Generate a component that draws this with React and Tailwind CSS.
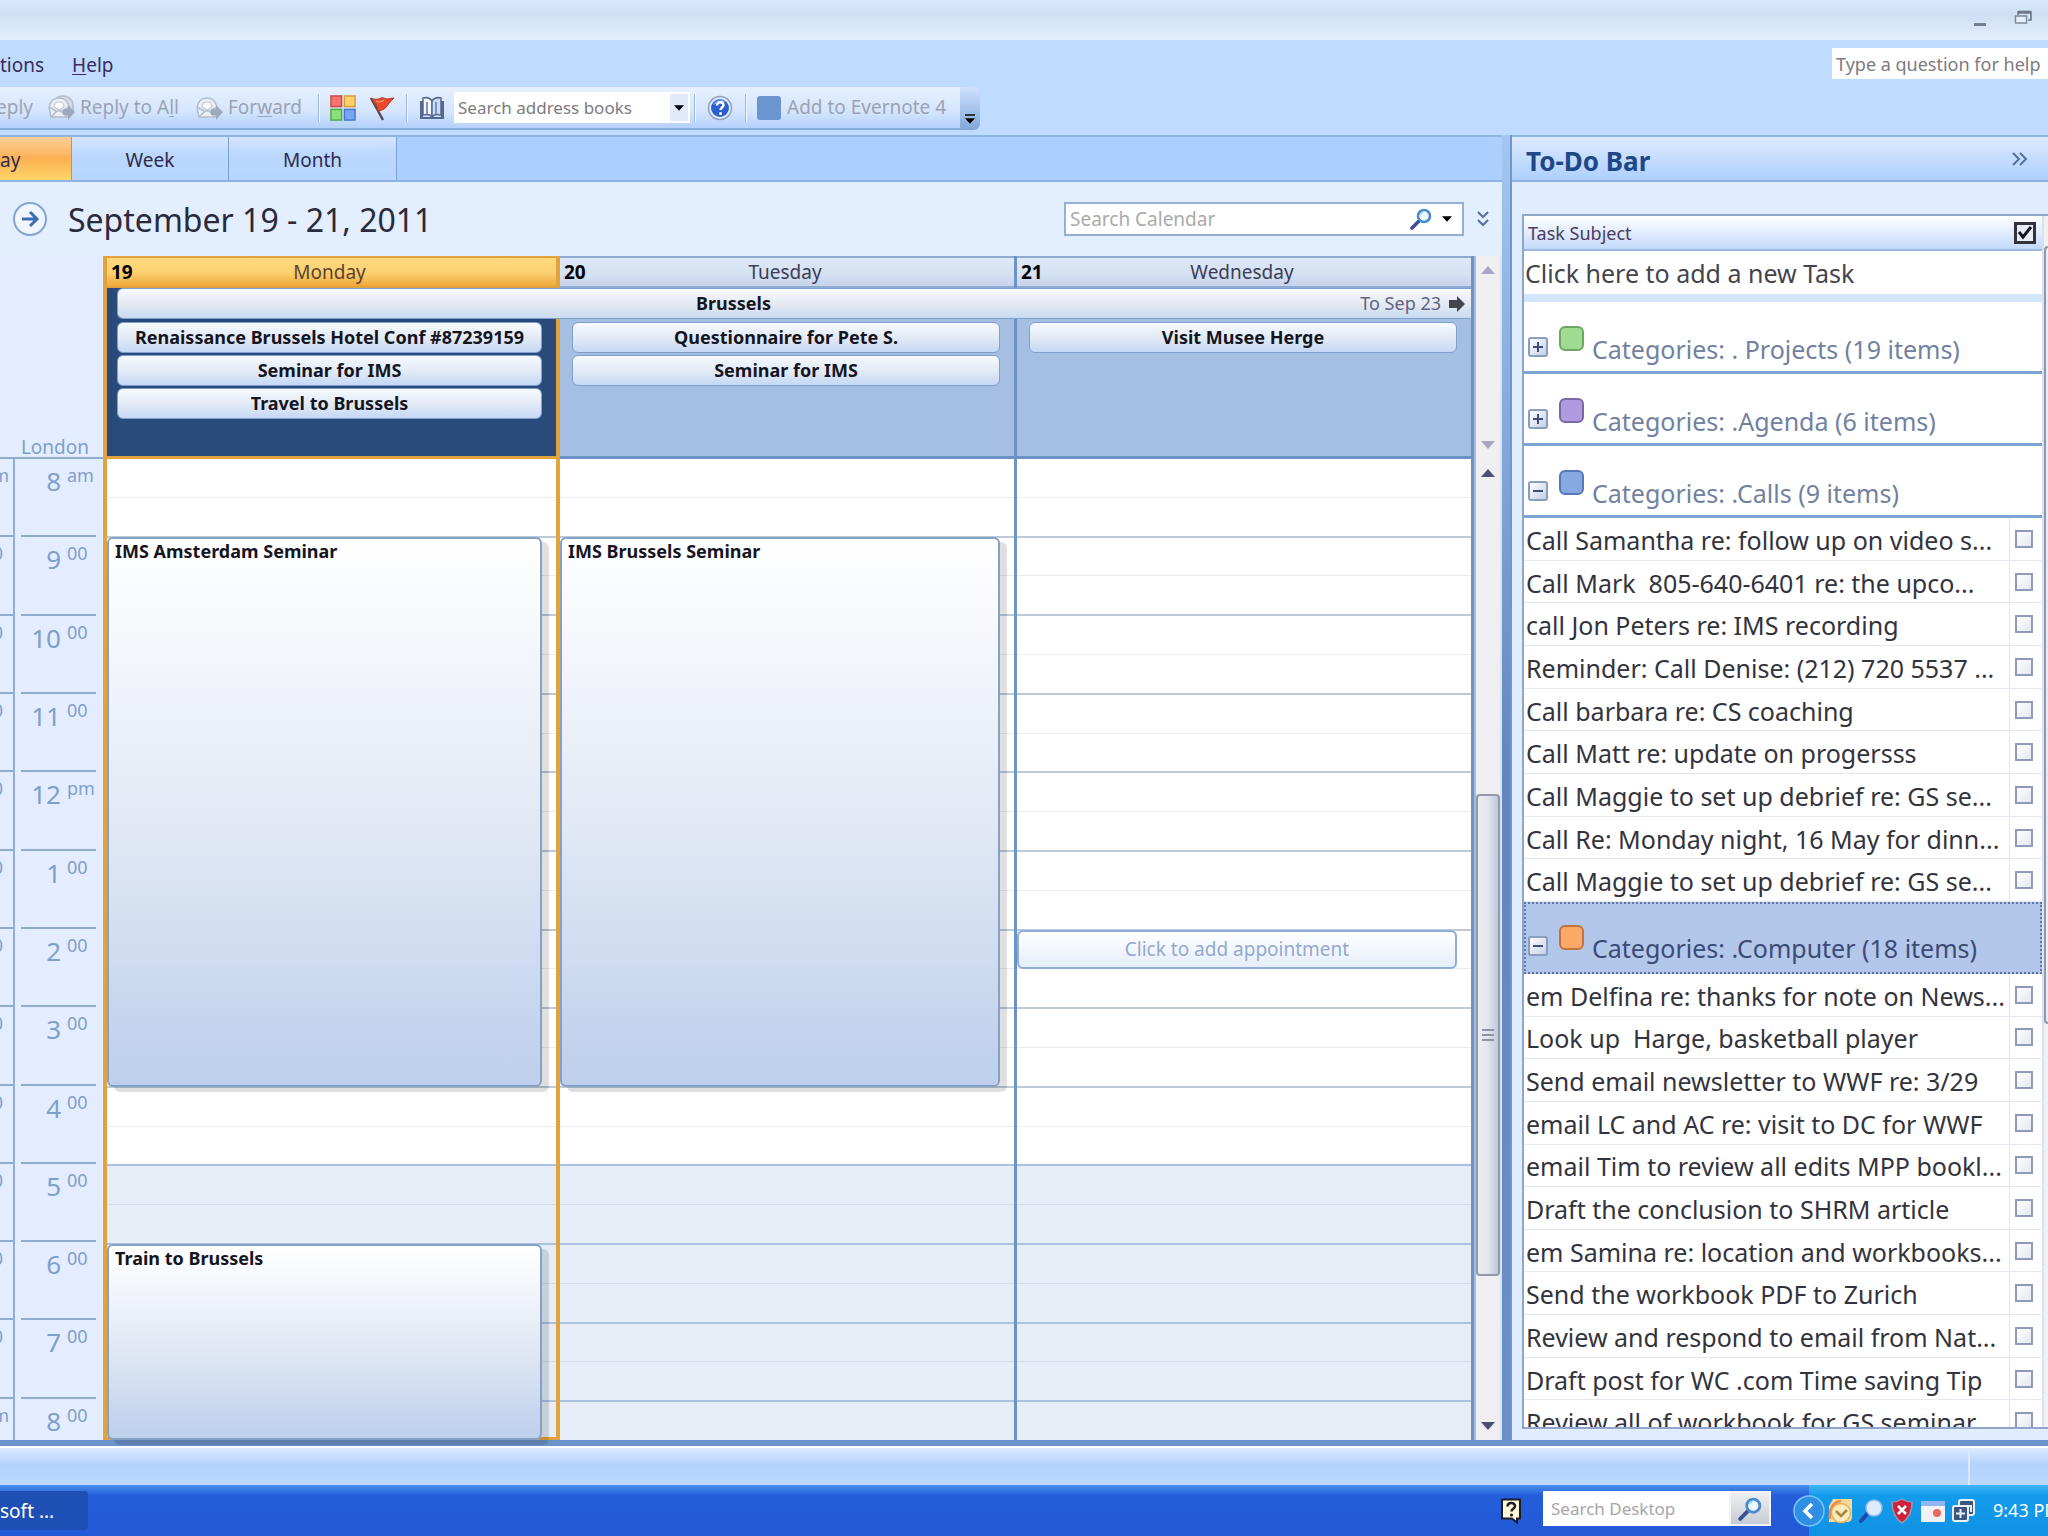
import { useState } from 'react'
import clsx from 'clsx'

const HOURS = [
  { hour: '8',  suffix: 'am', left: 'am' },
  { hour: '9',  suffix: '00', left: '00' },
  { hour: '10', suffix: '00', left: '00' },
  { hour: '11', suffix: '00', left: '00' },
  { hour: '12', suffix: 'pm', left: '00' },
  { hour: '1',  suffix: '00', left: '00' },
  { hour: '2',  suffix: '00', left: '00' },
  { hour: '3',  suffix: '00', left: '00' },
  { hour: '4',  suffix: '00', left: '00' },
  { hour: '5',  suffix: '00', left: '00' },
  { hour: '6',  suffix: '00', left: '00' },
  { hour: '7',  suffix: '00', left: '00' },
  { hour: '8',  suffix: '00', left: 'pm' },
]

// start and end are half-hour slots counted from 8 am
const SLOTS = 25
const WORK_END = 18

const DAYS = [
  {
    date: '19',
    name: 'Monday',
    today: true,
    allDay: ['Renaissance Brussels Hotel Conf #87239159', 'Seminar for IMS', 'Travel to Brussels'],
    events: [
      { title: 'IMS Amsterdam Seminar', start: 2, end: 16 },
      { title: 'Train to Brussels', start: 20, end: 25 },
    ],
  },
  {
    date: '20',
    name: 'Tuesday',
    allDay: ['Questionnaire for Pete S.', 'Seminar for IMS'],
    events: [{ title: 'IMS Brussels Seminar', start: 2, end: 16 }],
  },
  {
    date: '21',
    name: 'Wednesday',
    allDay: ['Visit Musee Herge'],
    events: [],
    placeholder: { title: 'Click to add appointment', start: 12, end: 13 },
  },
]

const CALLS = [
  'Call Samantha re: follow up on video s...',
  'Call Mark  805-640-6401 re: the upco...',
  'call Jon Peters re: IMS recording',
  'Reminder: Call Denise: (212) 720 5537 ...',
  'Call barbara re: CS coaching',
  'Call Matt re: update on progersss',
  'Call Maggie to set up debrief re: GS se...',
  'Call Re: Monday night, 16 May for dinn...',
  'Call Maggie to set up debrief re: GS se...',
]

const COMPUTER = [
  'em Delfina re: thanks for note on News...',
  'Look up  Harge, basketball player',
  'Send email newsletter to WWF re: 3/29',
  'email LC and AC re: visit to DC for WWF',
  'email Tim to review all edits MPP bookl...',
  'Draft the conclusion to SHRM article',
  'em Samina re: location and workbooks...',
  'Send the workbook PDF to Zurich',
  'Review and respond to email from Nat...',
  'Draft post for WC .com Time saving Tip',
  'Review all of workbook for GS seminar',
]

const slotStyle = (start, end) => ({
  top: `${(start / SLOTS) * 100}%`,
  height: `${((end - start) / SLOTS) * 100}%`,
})

function Triangle({ small, up }) {
  return (
    <svg viewBox="0 0 16 9" className={clsx('shrink-0', small ? 'h-1.5 w-2.5' : 'h-2 w-3.5')} fill="currentColor" aria-hidden="true">
      <path d={up ? 'M8 0 16 9H0z' : 'M0 0h16L8 9z'} />
    </svg>
  )
}

function Magnifier({ className }) {
  return (
    <svg viewBox="0 0 22 22" className={className} fill="none" aria-hidden="true">
      <path d="M2 20 9 13" stroke="#3f4f96" strokeWidth="3.6" strokeLinecap="round" />
      <circle cx="14" cy="8" r="6" fill="#eef8ff" stroke="#4a8ccb" strokeWidth="2.6" />
      <path d="M10.5 7a4 4 0 0 1 3-3" stroke="#9fdcf0" strokeWidth="1.5" />
    </svg>
  )
}

function MailIcon({ double }) {
  return (
    <svg viewBox="0 0 28 28" className="size-7 shrink-0" fill="none" aria-hidden="true">
      {double && <path d="M7 7c1-4 4-5 8-5 6 0 10 4 10 9v6h-4" fill="#d3dae6" stroke="#b3bccb" strokeWidth="1.5" />}
      <path d="M1 14C2 7 6 4 11 4s9 3 10 10l-2 9H3z" fill="#eaeff7" stroke="#b3bccb" strokeWidth="1.5" />
      <path d="M6 13c0-4 2-5 5-5s5 1 5 5l-5 3z" fill="#f8faff" stroke="#c3cad6" strokeWidth="1.2" />
      <path d="m3 23 6-6h4l6 6M1 13l7 4M21 13l-7 4" stroke="#b3bccb" strokeWidth="1.5" />
      <path d="M15 15h5v-4l7 7-7 8v-5h-5z" fill="#9fa9bd" />
    </svg>
  )
}

function Divider() {
  return <div className="h-7 w-0.5 border-l border-[#9dbde9] bg-[#f0f6ff]" />
}

function TitleBar() {
  return (
    <header className="flex h-10 shrink-0 items-start justify-end gap-7 bg-linear-to-b from-[#d8e7fb] via-[#cfdff5] via-35% to-[#e2effd] pt-2.5 pr-4">
      <button type="button" aria-label="Minimize" className="flex h-4 items-end">
        <span className="h-[3px] w-3 bg-[#75818f]" />
      </button>
      <button type="button" aria-label="Restore">
        <svg viewBox="0 0 18 14" className="h-3.5 w-[18px]" fill="none">
          <path d="M4 5V2h13v8h-3" stroke="#6c7887" strokeWidth="1.6" />
          <path d="M4 2.2h13" stroke="#6c7887" strokeWidth="3" />
          <path d="M1.5 6h11v7h-11z" fill="#e6eef9" stroke="#7c8897" strokeWidth="1.4" />
        </svg>
      </button>
    </header>
  )
}

function MenuBar() {
  return (
    <nav className="flex h-[47px] shrink-0 items-center justify-between bg-[#bfdbff]">
      <div className="flex gap-7 pt-0.5 text-[19px] leading-6 text-[#3b2c5c]">
        <button type="button">tions</button>
        <button type="button"><span className="underline underline-offset-2">H</span>elp</button>
      </div>
      <input type="text" aria-label="Type a question for help" placeholder="Type a question for help"
        className="h-[31px] w-[216px] bg-white pl-1 text-[18px] placeholder:text-[#7b7b80]" />
    </nav>
  )
}

function Toolbar() {
  return (
    <div className="flex h-12 shrink-0 items-start bg-[#bfdbff]">
      <div className="flex h-[43px] w-[960px] items-center border-b-2 border-[#86abe0] bg-linear-to-b from-[#e6f0ff] via-[#d5e5fe] via-60% to-[#b3d0fb] text-[19px] whitespace-nowrap text-[#9aa3b4]">
        <button type="button" className="w-12 -indent-1 text-left">eply</button>
        <button type="button" className="flex w-[148px] items-center gap-1">
          <MailIcon double />
          <span>Reply to A<span className="underline underline-offset-2">l</span>l</span>
        </button>
        <button type="button" className="flex w-[122px] items-center gap-1">
          <MailIcon />
          <span>For<span className="underline underline-offset-2">w</span>ard</span>
        </button>
        <Divider />
        <button type="button" aria-label="Categorize" className="ml-2.5">
          <svg viewBox="0 0 28 28" className="size-[26px]">
            <rect x="1" y="1" width="11.500" height="11.500" fill="#f4736c" stroke="#c9483f" strokeWidth="1.5" />
            <rect x="15.500" y="1" width="11.500" height="11.500" fill="#fbcf6d" stroke="#d79a2c" strokeWidth="1.5" />
            <rect x="1" y="15.500" width="11.500" height="11.500" fill="#8be07c" stroke="#4aa83c" strokeWidth="1.5" />
            <rect x="15.500" y="15.500" width="11.500" height="11.500" fill="#79a4f0" stroke="#4674cc" strokeWidth="1.5" />
          </svg>
        </button>
        <button type="button" aria-label="Follow up" className="ml-3.5">
          <svg viewBox="0 0 26 26" className="size-[26px]">
            <path d="M1 3 13 25" stroke="#5a4a52" strokeWidth="2.400" />
            <path d="M2 4c4 0 6 1 9-1 2-1 4 1 6 1s4-1 7-1c-3 3-5 5-7 8s-4 4-9 5C8 11 5 9 2 4z" fill="#e8492b" stroke="#b8341c" />
            <path d="M6 6c3 1 6 1 8-1" stroke="#f58a6a" strokeWidth="1.5" fill="none" />
          </svg>
        </button>
        <div className="ml-2.5"><Divider /></div>
        <button type="button" aria-label="Address book" className="ml-2.5">
          <svg viewBox="0 0 28 26" className="h-[26px] w-7" fill="none">
            <path d="M2 6h3v16h18V6h3v18H2z" fill="#55688f" />
            <path d="M5 3c4-1 7 0 9 3v16c-2-3-5-3-9-2z" fill="#f6f9ff" stroke="#55688f" strokeWidth="1.5" />
            <path d="M23 3c-4-1-7 0-9 3v16c2-3 5-3 9-2z" fill="#cddcf5" stroke="#55688f" strokeWidth="1.5" />
            <path d="M9 7v12M18 7v12" stroke="#7d93bd" strokeWidth="2" />
          </svg>
        </button>
        <div className="ml-2 flex h-[31px] bg-white">
          <input type="text" aria-label="Search address books" placeholder="Search address books"
            className="w-[216px] pl-1 text-[17px] placeholder:text-[#7b7b80]" />
          <button type="button" aria-label="Show address books" className="my-0.5 mr-0.5 flex w-[18px] items-center justify-center bg-[#e0eafa] text-black">
            <Triangle small />
          </button>
        </div>
        <div className="ml-1"><Divider /></div>
        <button type="button" aria-label="Help" className="ml-[11px]">
          <svg viewBox="0 0 26 26" className="size-[26px]">
            <circle cx="13" cy="13" r="11.5" fill="#e9f0fb" stroke="#8a9fc4" strokeWidth="1.5" />
            <circle cx="13" cy="13" r="9" fill="#2a5fd0" />
            <path d="M6 10a8 8 0 0 1 13-3c-5 0-9 1-13 3z" fill="#6f9bf0" />
            <path d="M10 10.5c0-4.500 6.500-4 6.500-.5 0 2.500-3 2.500-3 5" stroke="#fff" strokeWidth="2.400" fill="none" />
            <circle cx="13.500" cy="18.500" r="1.500" fill="#fff" />
          </svg>
        </button>
        <div className="ml-3"><Divider /></div>
        <button type="button" className="ml-2.5 flex items-center gap-1.5">
          <span className="size-6 rounded-[3px] bg-[#6b95cf]" />
          Add to Evernote 4
        </button>
      </div>
      <button type="button" aria-label="Toolbar options"
        className="flex h-[43px] w-5 flex-col items-center justify-end gap-0.5 rounded-r-md bg-linear-to-b from-[#cfe2ff] to-[#82a7da] pb-1.5 text-black">
        <span className="h-0.5 w-2.5 bg-[#33333d]" />
        <Triangle small />
      </button>
    </div>
  )
}

function ViewTabs() {
  const [view, setView] = useState('Day')
  const tab = 'border-r border-[#7ba1d4] pt-1 text-[19px]'
  const on = 'bg-linear-to-b from-[#fdcf98] via-[#fcb153] via-50% to-[#fed567]'
  const off = 'bg-linear-to-b from-[#d5e6ff] via-[#bcd8fe] via-40% to-[#b6d5ff]'
  return (
    <div className="flex h-[47px] shrink-0 border-y-2 border-[#8fb4e4] bg-[#abd0ff] text-[#2f2a4d]">
      <button type="button" onClick={() => setView('Day')} className={clsx(tab, 'w-[72px] text-left', view === 'Day' ? on : off)}>ay</button>
      <button type="button" onClick={() => setView('Week')} className={clsx(tab, 'w-[157px]', view === 'Week' ? on : off)}>Week</button>
      <button type="button" onClick={() => setView('Month')} className={clsx(tab, 'w-[168px]', view === 'Month' ? on : off)}>Month</button>
    </div>
  )
}

function DateHeader() {
  return (
    <div className="flex h-[74px] shrink-0 items-center bg-[#e3eeff] pr-3">
      <button type="button" aria-label="Next" className="ml-3">
        <svg viewBox="0 0 36 36" className="size-9" fill="none">
          <circle cx="18" cy="18" r="16" fill="#f0f6ff" stroke="#86a3d2" strokeWidth="2" />
          <path d="M10 18h15M18 11l7 7-7 7" stroke="#3e6cb4" strokeWidth="3" />
        </svg>
      </button>
      <h1 className="ml-5 pt-0.5 text-[32px] leading-10 text-[#2a2a3a]">September 19 - 21, 2011</h1>
      <div className="ml-auto flex h-[34px] w-[400px] items-center border-2 border-[#94afd3] bg-white">
        <input type="search" aria-label="Search Calendar" placeholder="Search Calendar"
          className="min-w-0 flex-1 pl-1 text-[19px] placeholder:text-[#a9aba9]" />
        <button type="button" aria-label="Search"><Magnifier className="size-[22px]" /></button>
        <button type="button" aria-label="Search options" className="flex w-[30px] justify-center text-black"><Triangle small /></button>
      </div>
      <button type="button" aria-label="Expand the query builder" className="ml-3">
        <svg viewBox="0 0 14 16" className="h-4 w-3.5" fill="none" stroke="#55709f" strokeWidth="2">
          <path d="m2 1 5 5 5-5M2 9l5 5 5-5" />
        </svg>
      </button>
    </div>
  )
}

function TimeScale() {
  return (
    <div className="flex w-[103px] shrink-0 flex-col bg-[#e4edff] text-[#7f9fcb]">
      <div className="flex h-[201px] items-end justify-end pr-3.5 text-[19px] leading-5">London</div>
      <div className="flex min-h-0 flex-1 border-t-2 border-[#8fabcf]">
        <div className="flex w-[15px] flex-col overflow-hidden border-r-2 border-[#8fb0d4]">
          {HOURS.map((h, i) => (
            <div key={i} className={clsx('flex min-h-0 justify-end overflow-hidden pt-1.5 text-[18px] leading-5',
              i === 12 ? 'flex-1' : 'flex-2', i > 0 && 'border-t-2 border-[#8fabcf]', h.left === '00' ? 'pr-2.5' : 'pr-1')}>
              {h.left}
            </div>
          ))}
        </div>
        <div className="flex flex-1 flex-col pr-[7px] pl-1.5">
          {HOURS.map((h, i) => (
            <div key={i} className={clsx('flex min-h-0 items-start pt-1.5 text-[18px] leading-5',
              i === 12 ? 'flex-1' : 'flex-2', i > 0 && 'border-t-2 border-[#8fabcf]')}>
              <span className="w-10 pt-0.5 text-right text-[26px] leading-7">{h.hour}</span>
              <span className="ml-1.5">{h.suffix}</span>
            </div>
          ))}
        </div>
      </div>
    </div>
  )
}

const pill = 'flex h-[31px] w-full items-center justify-center rounded-md border border-[#7f9fce] bg-linear-to-b from-[#f6faff] via-[#e1e9f5] via-55% to-[#c5d8f5] text-[18px] font-bold whitespace-nowrap text-[#15151f]'

function Calendar() {
  return (
    <div className="relative grid min-w-0 flex-1 grid-cols-3">
      {DAYS.map(day => (
        <section key={day.date} className={clsx('flex min-w-0 flex-col',
          day.today ? 'border-x-4 border-[#e2a33c]' : 'border-r-[3px] border-[#6c93c6]')}>
          <div className={clsx('grid h-8 shrink-0 grid-cols-[1fr_auto_1fr] items-center border-y-2 pr-2 pl-1 text-[19px]',
            day.today
              ? 'border-[#e2a33c] bg-linear-to-b from-[#ffdb7e] via-[#fdd272] via-50% to-[#f0a93a] text-[#5b4330]'
              : 'border-[#8fabd0] bg-linear-to-b from-[#dde8f7] via-[#d5e0f3] via-60% to-[#c5d4ec] text-[#3c3c55]')}>
            <span className="font-bold text-black">{day.date}</span>
            <span>{day.name}</span>
          </div>
          <div className={clsx('flex h-[171px] shrink-0 flex-col gap-0.5 border-b-[3px] pt-[34px] pr-3.5',
            day.today ? 'border-[#e2a33c] bg-[#294b7b] pl-2.5' : 'border-[#6c93c6] bg-[#a5bfe3] pl-3')}>
            {day.allDay.map(title => (
              <button type="button" key={title} className={pill}>{title}</button>
            ))}
          </div>
          <div className="relative flex min-h-0 flex-1 flex-col">
            {Array.from({ length: SLOTS }, (_, i) => (
              <div key={i} className={clsx('min-h-0 flex-1',
                i >= WORK_END ? 'bg-[#e6edf7]' : 'bg-white',
                i > 0 && i % 2 === 1 && (i >= WORK_END ? 'border-t border-[#d3ddea]' : 'border-t border-[#e9ebee]'),
                i > 0 && i % 2 === 0 && (i >= WORK_END ? 'border-t-2 border-[#a9c2e2]' : 'border-t-2 border-[#bccad8]'))} />
            ))}
            {day.today && <div className="absolute inset-x-0 bottom-0 h-[3px] bg-[#e2a33c]" />}
            {day.events.map(e => (
              <button type="button" key={e.title} style={slotStyle(e.start, e.end)}
                className="absolute left-0 right-3.5 flex items-start rounded-md border-2 border-[#86a1c6] bg-linear-to-b from-white via-[#e3eaf5] via-50% to-[#bdcfec] pl-1.5 text-[18px] leading-6 font-bold text-[#15151f] shadow-[7px_5px_1px_#00000020]">
                {e.title}
              </button>
            ))}
            {day.placeholder && (
              <button type="button" style={slotStyle(day.placeholder.start, day.placeholder.end)}
                className="absolute left-0 right-3.5 rounded-md border-2 border-[#8fadd6] bg-linear-to-b from-white to-[#e6eefb] text-[19px] text-[#93a9cf]">
                {day.placeholder.title}
              </button>
            )}
          </div>
        </section>
      ))}
      {/* event that runs across all three days */}
      <button type="button"
        className="absolute top-8 right-[3px] left-3.5 grid h-[31px] grid-cols-[1fr_auto_1fr] items-center rounded-l-md border border-r-0 border-[#7f9fce] bg-linear-to-b from-[#f8fbff] via-[#e3e8f0] via-55% to-[#c8dbf3] pr-1.5 text-[18px]">
        <span />
        <span className="pr-[116px] font-bold text-[#15151f]">Brussels</span>
        <span className="flex items-center justify-end gap-2 text-[#5d6384]">
          To Sep 23
          <svg viewBox="0 0 16 16" className="size-4" fill="#44444c" aria-hidden="true"><path d="M0 4h8V0l8 8-8 8v-4H0z" /></svg>
        </span>
      </button>
    </div>
  )
}

function CalendarScroll() {
  return (
    <div className="flex w-7 shrink-0 flex-col border-x-2 border-l-[#a9b9dd] border-r-[#d8e4f6] bg-[#efeff1] text-[#4b4f72]">
      <div className="flex h-[203px] shrink-0 flex-col items-center justify-between pt-2.5 pb-2.5 text-[#a5a8c0]">
        <Triangle up />
        <Triangle />
      </div>
      <div className="flex min-h-0 flex-1 flex-col items-center justify-between pt-2.5 pb-2.5">
        <Triangle up />
        <div className="flex w-full flex-1 flex-col pt-[317px] pb-[146px]">
          <div className="flex flex-1 flex-col items-center justify-center gap-[3px] rounded-sm border-2 border-[#9497ab] bg-linear-to-r from-[#e9edf1] via-[#e4e7ee] via-45% to-[#bccadc]">
            <span className="h-0.5 w-3 bg-[#8c93a8]" />
            <span className="h-0.5 w-3 bg-[#8c93a8]" />
            <span className="h-0.5 w-3 bg-[#8c93a8]" />
          </div>
        </div>
        <Triangle />
      </div>
    </div>
  )
}

function Group({ label, color, open, selected }) {
  return (
    <button type="button" aria-expanded={open}
      className={clsx('flex h-[72px] w-full shrink-0 items-end text-left text-[25px] leading-8',
        selected ? 'border-2 border-dotted border-[#5f75a3] bg-[#b2c7e9] pb-2 pl-0.5 text-[#3c4a76]' : 'border-b-3 border-[#7ba3d3] pb-1.5 pl-1 text-[#71819f]')}>
      <span className="mb-2 flex size-5 items-center justify-center rounded-[3px] border-2 border-[#8b9dbd] bg-linear-to-br from-white to-[#c3d0e6]">
        <svg viewBox="0 0 10 10" className="size-2.5" stroke="#3d4d73" strokeWidth="2" aria-hidden="true">
          <path d={open ? 'M0 5h10' : 'M0 5h10M5 0v10'} />
        </svg>
      </span>
      <span className={clsx('mb-3.5 ml-[11px] size-[25px] rounded-md border-2', color)} />
      <span className="ml-2 whitespace-pre">{label}</span>
    </button>
  )
}

function Task({ label }) {
  return (
    <li className="flex flex-1 border-b border-[#e4e8ee] bg-white">
      <label className="flex min-w-0 flex-1">
        <span className="flex min-w-0 flex-1 items-center border-r border-[#e4e8ee] pt-0.5 pl-0.5 text-[25px] leading-8 whitespace-pre text-[#33333d]">{label}</span>
        <span className="flex w-8 items-center justify-center pr-1">
          <input type="checkbox" className="size-[18px] appearance-none border-2 border-[#9099b8] bg-linear-to-br from-white to-[#e4e7f2] checked:bg-[#5f75a3]" />
        </span>
      </label>
    </li>
  )
}

function TodoBar() {
  return (
    <aside className="flex w-[538px] shrink-0 flex-col border-l-2 border-[#6f97cb] bg-[#e0edff]">
      <div className="flex h-[47px] shrink-0 items-center justify-between border-y-2 border-[#8fb4e4] bg-linear-to-b from-[#dceafe] to-[#aed0fd] pr-5 pl-3.5">
        <h2 className="pt-1 text-[26px] leading-8 font-bold text-[#1f4788]">To-Do Bar</h2>
        <button type="button" aria-label="Minimize the To-Do Bar">
          <svg viewBox="0 0 16 14" className="h-3.5 w-4" fill="none" stroke="#55709f" strokeWidth="2">
            <path d="m1 1 6 6-6 6M8 1l6 6-6 6" />
          </svg>
        </button>
      </div>
      <div className="mt-8 mb-[11px] ml-2.5 flex min-h-0 flex-1 border-y-2 border-l-2 border-[#8fa6c9] bg-white">
        <div className="flex min-w-0 flex-1 flex-col overflow-hidden">
          <div className="flex h-[35px] shrink-0 items-center justify-between border-b-2 border-[#9bb8de] bg-linear-to-b from-white to-[#c4dafb] pr-1.5 pl-1 text-[18px] text-[#4d3a60]">
            <span className="pt-0.5">Task Subject</span>
            <input type="checkbox" defaultChecked aria-label="Complete" className="peer sr-only" />
            <svg viewBox="0 0 22 22" className="size-[22px]" fill="none" aria-hidden="true">
              <path d="M1.500 1.500h19v19h-19z" fill="#e9edf6" stroke="#33333d" strokeWidth="3" />
              <path d="m5 10 4 5 8-10" stroke="#15151f" strokeWidth="3" />
            </svg>
          </div>
          <input type="text" aria-label="New task" placeholder="Click here to add a new Task"
            className="h-[43px] shrink-0 pl-px text-[25px] placeholder:text-[#44444c]" />
          <div className="h-2 shrink-0 bg-[#d3e5fb]" />
          <Group label="Categories: . Projects (19 items)" color="border-[#6fa562] bg-[#9fdb90]" />
          <Group label="Categories: .Agenda (6 items)" color="border-[#7a68a4] bg-[#b09ae0]" />
          <Group label="Categories: .Calls (9 items)" color="border-[#5779b5] bg-[#86a9e2]" open />
          <ul className="flex h-96 shrink-0 flex-col">
            {CALLS.map((t, i) => <Task key={i} label={t} />)}
          </ul>
          <Group label="Categories: .Computer (18 items)" color="border-[#c0733f] bg-[#fba868]" open selected />
          <ul className="flex h-[469px] shrink-0 flex-col">
            {COMPUTER.map((t, i) => <Task key={i} label={t} />)}
          </ul>
        </div>
        <div className="flex w-1.5 shrink-0 flex-col border-l-2 border-[#d5e2f5] bg-[#f1f1f4] pt-[30px]">
          <div className="h-[778px] rounded-l-sm border-2 border-r-0 border-[#9497ab] bg-[#e9edf1]" />
        </div>
      </div>
    </aside>
  )
}

function StatusBar() {
  return (
    <div className="flex h-[45px] shrink-0 flex-col border-t-[6px] border-[#6c93c9]">
      <div className="flex flex-1 justify-end border-t-2 border-white bg-linear-to-b from-[#dceaff] via-[#b4d2fe] via-45% to-[#bad8ff]">
        <div className="w-20 border-l-2 border-[#d9e9ff]" />
      </div>
    </div>
  )
}

function Taskbar() {
  return (
    <footer className="flex h-[51px] shrink-0 items-stretch bg-linear-to-b from-[#4a90ee] via-[#245edb] via-20% to-[#2158d6]">
      <button type="button" className="my-1.5 w-22 rounded-r-sm bg-[#1d4fb5] pt-0.5 text-left text-[19px] text-white">soft ...</button>
      <button type="button" aria-label="Language bar help" className="ml-auto">
        <svg viewBox="0 0 22 26" className="h-[26px] w-[22px]">
          <path d="M2 1.500h18v19h-3v4l-5-4H2z" fill="#fff9d8" stroke="#1d1d28" strokeWidth="2" />
          <path d="M7.500 8.500c0-5 7.500-4.500 7.500-.5 0 3-3.500 2.500-3.500 5.500" fill="none" stroke="#1d1d28" strokeWidth="2.500" />
          <circle cx="11.500" cy="17" r="1.600" fill="#1d1d28" />
        </svg>
      </button>
      <div className="my-1.5 ml-[21px] flex h-[35px]">
        <input type="search" aria-label="Search Desktop" placeholder="Search Desktop"
          className="w-[186px] bg-white pl-2 text-[17px] placeholder:text-[#a6a6a8]" />
        <button type="button" aria-label="Search" className="flex w-[42px] items-center justify-center border-2 border-[#f3f3f3] bg-linear-to-b from-[#efefef] to-[#c6ccd6]">
          <Magnifier className="size-6" />
        </button>
      </div>
      <div className="ml-[38px] flex w-[239px] items-center bg-linear-to-b from-[#3fb5f5] via-[#129bec] via-20% to-[#1192e4]">
        <button type="button" aria-label="Show hidden icons" className="-ml-4">
          <svg viewBox="0 0 32 32" className="size-8" fill="none">
            <circle cx="16" cy="16" r="15" fill="#2f8fe4" stroke="#7cc4f8" strokeWidth="1.500" />
            <path d="m19 9-7 7 7 7" stroke="#fff" strokeWidth="3.500" />
          </svg>
        </button>
        <div className="ml-0.5 flex items-center gap-[5px]">
          {/* Outlook */}
          <svg viewBox="0 0 26 26" className="size-[26px]" fill="none" aria-hidden="true">
            <path d="M6 1h19v18c0 3-2 5-5 5H2V8z" fill="#f8d99a" />
            <circle cx="14" cy="15" r="9.500" fill="#fdebbd" stroke="#e2b35c" strokeWidth="1.500" />
            <path d="m9 13 5 5 6-6" stroke="#a9843c" strokeWidth="2.500" />
            <path d="M3 21C2 12 5 4 14 3" stroke="#ee8a4e" strokeWidth="2.500" />
          </svg>
          {/* desktop search */}
          <svg viewBox="0 0 26 26" className="size-[26px]" fill="none" aria-hidden="true">
            <path d="m3 23 7-8" stroke="#1d49a8" strokeWidth="4" strokeLinecap="round" />
            <circle cx="16" cy="10" r="8" fill="#dcecfc" stroke="#8fbcec" strokeWidth="1.500" />
          </svg>
          {/* security alert */}
          <svg viewBox="0 0 26 26" className="size-[26px]" fill="none" aria-hidden="true">
            <path d="M13 1c3 2 6 3 10 3 0 9-2 16-10 21C5 20 3 13 3 4c4 0 7-1 10-3z" fill="#cf2236" stroke="#8f9bb5" strokeWidth="1.500" />
            <path d="m9 8 8 8M17 8l-8 8" stroke="#fff" strokeWidth="2.500" />
          </svg>
          <svg viewBox="0 0 26 26" className="size-[26px]" fill="none" aria-hidden="true">
            <rect x="1" y="3" width="24" height="21" rx="1" fill="#f1f1f6" />
            <path d="M1 3h24v5H1z" fill="#8fb8f2" />
            <circle cx="17" cy="15" r="4" fill="#e86a5c" />
          </svg>
          <svg viewBox="0 0 26 26" className="size-[26px]" fill="none" stroke="#e9f1fb" strokeWidth="2" aria-hidden="true">
            <rect x="8" y="2" width="15" height="15" rx="2" fill="#3d567e" />
            <rect x="2" y="8" width="15" height="15" rx="2" fill="#3d567e" />
            <path d="M9.500 11v9M5 15.500h9M12 8h8v6" />
          </svg>
        </div>
        <span className="ml-4 w-14 overflow-hidden text-[18px] whitespace-nowrap text-white">9:43 PM</span>
      </div>
    </footer>
  )
}

export default function App() {
  return (
    <div className="flex h-screen flex-col overflow-hidden bg-[#bfdbff] font-['Noto_Sans','Open_Sans',sans-serif]">
      <TitleBar />
      <MenuBar />
      <Toolbar />
      <div className="flex min-h-0 flex-1">
        <main className="flex min-w-0 flex-1 flex-col">
          <ViewTabs />
          <DateHeader />
          <div className="flex min-h-0 flex-1">
            <TimeScale />
            <Calendar />
            <CalendarScroll />
          </div>
        </main>
        <div className="w-2 shrink-0 bg-linear-to-b from-[#a5c6f2] via-[#5f86bd] to-[#6b92c8]" />
        <TodoBar />
      </div>
      <StatusBar />
      <Taskbar />
    </div>
  )
}
